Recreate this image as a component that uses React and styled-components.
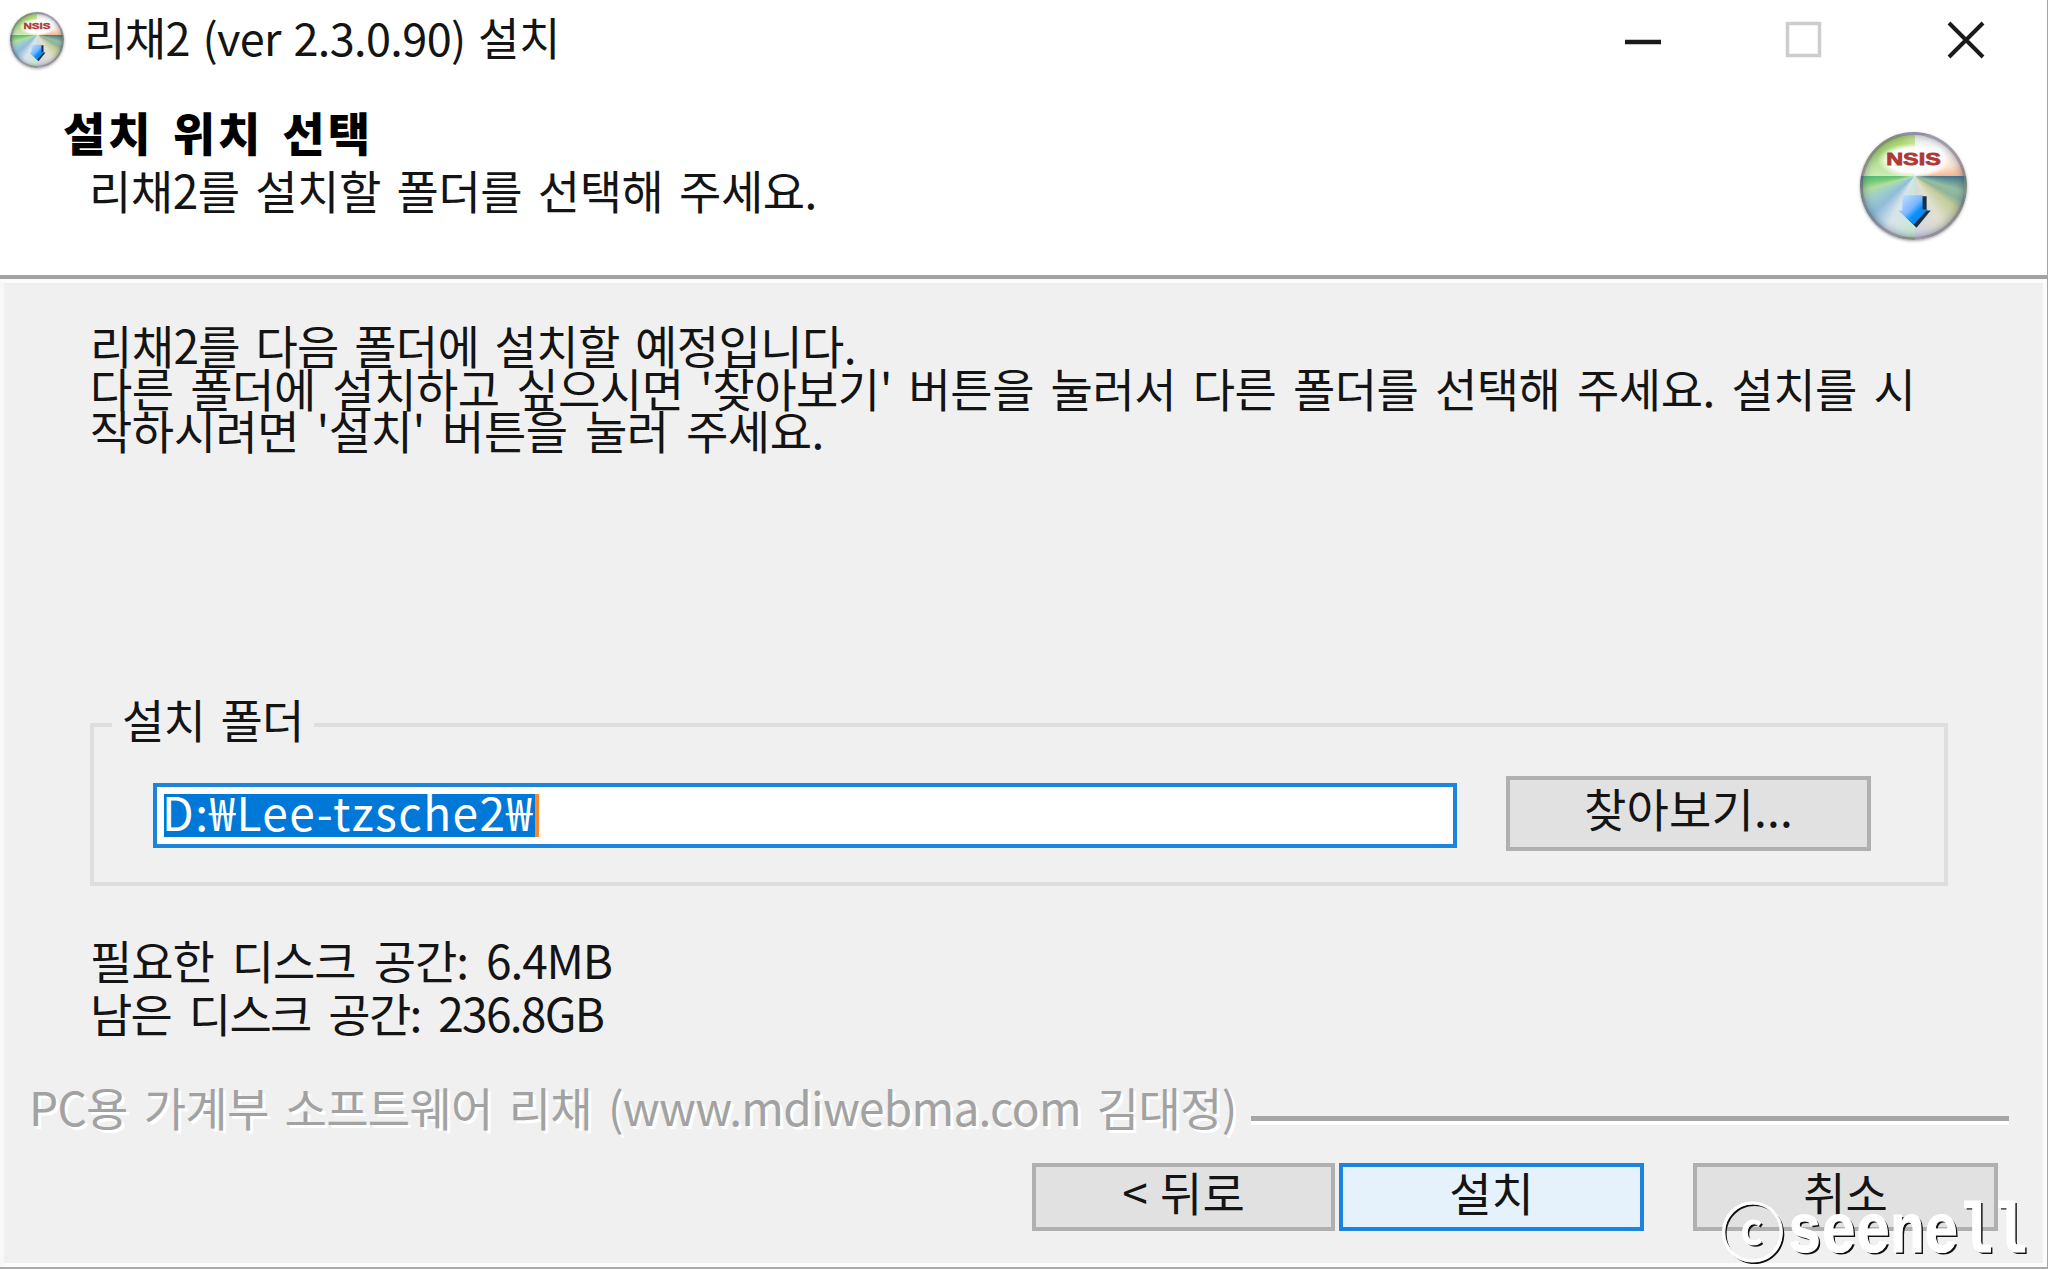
import React from 'react'
import styled, { createGlobalStyle } from 'styled-components'

const GlobalStyle = createGlobalStyle`
  * {
    box-sizing: border-box;
  }

  body {
    margin: 0;
    overflow: hidden;
    background: #f0f0f0;
  }
`

//------------------------------------------------------------------------
// Window
//------------------------------------------------------------------------

const Window = styled.div`
  position: relative;
  display: flex;
  flex-direction: column;
  width: 2048px;
  height: 1269px;
  background: #f0f0f0;
  border-right: 1px solid #a6a6a6;
  border-bottom: 2px solid #a9a9a9;
  color: #141414;
  font-family: 'Noto Sans CJK KR', sans-serif;
  font-size: 46px;
  white-space: nowrap;
`

const Label = styled.div`
  font-size: ${props => props.$size || 46}px;
  line-height: ${props => props.$line || 54}px;
  letter-spacing: ${props => props.$track || 0}px;
  word-spacing: ${props => props.$gap || 0}px;
`

//------------------------------------------------------------------------
// Title bar
//------------------------------------------------------------------------

const TitleBar = styled.div`
  display: flex;
  align-items: center;
  height: 80px;
  padding: 0 62px 0 10px;
  background: #fff;
`

const Title = styled(Label)`
  flex: 1;
  margin-left: 20px;
  padding-bottom: 7px;
`

const WindowControls = styled.div`
  display: flex;
  gap: 124px;

  svg {
    display: block;
    width: 38px;
    height: 38px;
  }
`

//------------------------------------------------------------------------
// Disc logo
//------------------------------------------------------------------------

const Disc = styled.div`
  width: ${props => (props.$small ? 54 : 107)}px;
  height: ${props => (props.$small ? 56 : 108)}px;
  flex: none;
  border-radius: 50%;
  border: ${props => (props.$small ? 2 : 3)}px solid rgba(100, 90, 115, 0.6);
  box-shadow: 0 1px 3px rgba(0, 0, 0, 0.35), inset 0 0 ${props => (props.$small ? 4 : 8)}px rgba(50, 70, 100, 0.5);
  background:
    radial-gradient(ellipse 36% 17% at 50% 25%, #fff 70%, transparent 100%),
    conic-gradient(from 0deg at 51% 40%,
      #f4f4f0 0deg, #fff 50deg, #fbe3d2 75deg, #f3b795 90deg,
      #3f7088 90deg, #6a9694 98deg, #92bfa3 108deg, #8fb49a 118deg, #c4cc9a 128deg,
      #e0e0cf 150deg, #d6d5e4 180deg, #c8e8d4 180deg, #d8e4ec 208deg,
      #8fbcd8 228deg, #9ccdcd 242deg, #b4dca4 254deg, #7bcb74 262deg, #4fb97a 270deg,
      #d0ebb8 270deg, #aadb78 300deg, #b3de72 340deg, #c8e598 360deg);

  svg {
    display: block;
    width: 100%;
    height: 100%;
  }
`

const DiscLogo = ({ small }) => (
  <Disc $small={small}>
    <svg viewBox="0 0 100 100" preserveAspectRatio="none">
      <defs>
        <linearGradient id={small ? 'arrowSmall' : 'arrow'} x1="0" y1="0" x2="1" y2="1">
          <stop offset="0" stopColor="#d3e5ff" />
          <stop offset="0.45" stopColor="#79b6ff" />
          <stop offset="0.6" stopColor="#0b92ff" />
          <stop offset="1" stopColor="#0873c8" />
        </linearGradient>
      </defs>
      <text
        x="50"
        y="29"
        textAnchor="middle"
        textLength="54"
        lengthAdjust="spacingAndGlyphs"
        fontFamily="'Liberation Sans', sans-serif"
        fontWeight="700"
        fontSize="17"
        fill="#ad3a35"
        stroke="#ad3a35"
        strokeWidth="0.8"
      >
        NSIS
      </text>
      <path d="M43 60 H63 V74 H67 L53 91 L38 76 H43 Z" fill="#17303f" />
      <path d="M39 59 H59 V73 H64 L50 88 L35 74 H39 Z" fill={`url(#${small ? 'arrowSmall' : 'arrow'})`} />
    </svg>
  </Disc>
)

//------------------------------------------------------------------------
// Page header
//------------------------------------------------------------------------

const Header = styled.div`
  display: flex;
  justify-content: space-between;
  height: 199px;
  padding: 0 80px 0 63px;
  background: #fff;
  border-bottom: 4px solid #a3a3a3;
`

const HeaderText = styled.div`
  padding-top: 24px;
`

const Heading = styled(Label)`
  color: #000;
  font-weight: 900;
`

const SubHeading = styled(Label)`
  margin: 4px 0 0 26px;
`

const HeaderLogo = styled.div`
  padding-top: 52px;
`

//------------------------------------------------------------------------
// Content
//------------------------------------------------------------------------

const Content = styled.div`
  flex: 1;
  display: flex;
  flex-direction: column;
  border: 4px solid #fcfcfc;
  border-left-color: #f8f8f8;
  padding: 40px 0 0 86px;
`

const Description = styled.div`
  height: 368px;
`

const FolderGroup = styled.fieldset`
  width: 1858px;
  height: 195px;
  min-width: 0;
  margin: 0;
  padding: 17px 73px 0 59px;
  border: 4px solid #dedede;
`

const Legend = styled.legend`
  margin-left: -41px;
  padding: 0 10px 14px;
`

const FolderRow = styled.div`
  display: flex;
  align-items: center;
  justify-content: space-between;
`

const PathInput = styled.div`
  display: flex;
  align-items: center;
  width: 1304px;
  height: 65px;
  margin-top: 4px;
  padding-left: 7px;
  background: #fff;
  border: 4px solid #1c84dc;
`

const Selection = styled(Label)`
  width: 375px;
  height: 43px;
  margin-bottom: 1px;
  background: #0078d7;
  border-right: 4px solid #ff8728;
  color: #fff;
  text-indent: -2px;
`

const DiskInfo = styled.div`
  margin-top: 47px;
`

//------------------------------------------------------------------------
// Footer
//------------------------------------------------------------------------

const Branding = styled.div`
  display: flex;
  align-items: center;
  gap: 16px;
  margin: 40px 34px 0 -61px;
`

const BrandText = styled(Label)`
  width: 1206px;
  color: #a2a2a2;
  text-shadow: 3px 3px 0 #fff;
`

const Rule = styled.div`
  flex: 1;
  height: 9px;
  margin-top: 28px;
  border-top: 5px solid #a6a6a6;
  border-bottom: 4px solid #fff;
`

const ButtonBar = styled.div`
  display: flex;
  justify-content: flex-end;
  padding: 30px 45px 0 0;
`

const Button = styled.button`
  display: flex;
  justify-content: center;
  width: ${props => props.$width || 305}px;
  height: ${props => props.$height || 68}px;
  margin: 0 0 0 ${props => props.$space || 0}px;
  padding: 0;
  border: 4px solid ${props => (props.$primary ? '#1c84dc' : '#b0b0b0')};
  background: ${props => (props.$primary ? '#e5f1fb' : '#e1e1e1')};
  color: inherit;
  font-family: inherit;
`

const Watermark = styled.div`
  position: absolute;
  right: 20px;
  bottom: 0;
  display: flex;
  align-items: flex-end;
  color: #fff;
  text-shadow: 2px 2px 0 #111;
`

const Copyright = styled.span`
  margin: 0 3px 6px 0;
  font-size: 64px;
  line-height: 66px;
  -webkit-text-stroke: 1px #fff;
`

const WatermarkName = styled.span`
  font-family: 'Liberation Mono', monospace;
  font-weight: 700;
  font-size: 57px;
  line-height: 60px;
  -webkit-text-stroke: 1px #fff;
  transform: scaleY(1.22);
  transform-origin: 50% 78%;
`

export default function App() {
  return (
    <>
      <GlobalStyle />
      <Window>
        <TitleBar>
          <DiscLogo small />
          <Title $size={45} $track={-0.6} $gap={3}>리채2 (ver 2.3.0.90) 설치</Title>
          <WindowControls>
            <svg viewBox="0 0 38 38">
              <path d="M2 21 H38" stroke="#1a1a1a" strokeWidth="4.5" />
            </svg>
            <svg viewBox="0 0 38 38">
              <rect x="2.5" y="2.5" width="32" height="32" fill="none" stroke="#cdcdcd" strokeWidth="3.5" />
            </svg>
            <svg viewBox="0 0 38 38">
              <path d="M2 2 L36 36 M36 2 L2 36" stroke="#1a1a1a" strokeWidth="4" />
            </svg>
          </WindowControls>
        </TitleBar>
        <Header>
          <HeaderText>
            <Heading $track={3} $gap={5.5}>설치 위치 선택</Heading>
            <SubHeading $track={-0.5} $gap={6}>리채2를 설치할 폴더를 선택해 주세요.</SubHeading>
          </HeaderText>
          <HeaderLogo>
            <DiscLogo />
          </HeaderLogo>
        </Header>
        <Content>
          <Description>
            <Label $line={42.7} $track={-0.6} $gap={5.6}>
              리채2를 다음 폴더에 설치할 예정입니다.
            </Label>
            <Label $line={42.7} $track={-0.5} $gap={6.8}>
              다른 폴더에 설치하고 싶으시면 '찾아보기' 버튼을 눌러서 다른 폴더를 선택해 주세요. 설치를 시
            </Label>
            <Label $line={42.7} $track={-0.5} $gap={7.6}>
              작하시려면 '설치' 버튼을 눌러 주세요.
            </Label>
          </Description>
          <FolderGroup>
            <Legend>
              <Label $track={-0.8} $gap={6}>설치 폴더</Label>
            </Legend>
            <FolderRow>
              <PathInput>
                <Selection $line={35} $track={1.5}>D:₩Lee-tzsche2₩</Selection>
              </PathInput>
              <Button $width={365} $height={75}>
                <Label $track={0.2}>찾아보기...</Label>
              </Button>
            </FolderRow>
          </FolderGroup>
          <DiskInfo>
            <Label $line={53} $track={-1.1} $gap={9}>필요한 디스크 공간: 6.4MB</Label>
            <Label $line={53} $track={-1.7} $gap={9}>남은 디스크 공간: 236.8GB</Label>
          </DiskInfo>
          <Branding>
            <BrandText $track={-0.7} $gap={6.4}>PC용 가계부 소프트웨어 리채 (www.mdiwebma.com 김대정)</BrandText>
            <Rule />
          </Branding>
          <ButtonBar>
            <Button $width={303}>
              <Label $line={48} $gap={2}>&lt; 뒤로</Label>
            </Button>
            <Button $primary $space={4}>
              <Label $line={48}>설치</Label>
            </Button>
            <Button $space={49}>
              <Label $line={48}>취소</Label>
            </Button>
          </ButtonBar>
        </Content>
        <Watermark>
          <Copyright>ⓒ</Copyright>
          <WatermarkName>seenell</WatermarkName>
        </Watermark>
      </Window>
    </>
  )
}
